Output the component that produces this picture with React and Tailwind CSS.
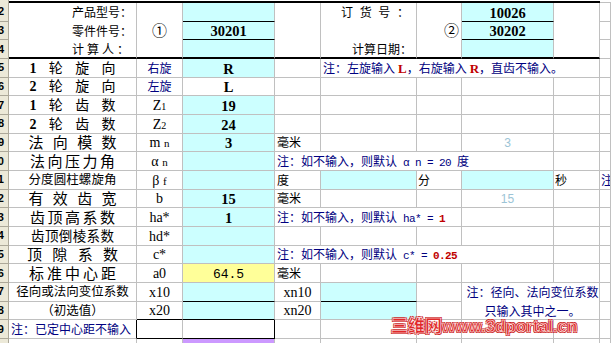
import React from 'react';
import clsx from 'clsx';
import { twMerge } from 'tailwind-merge';

// column widths of the sheet (B..J), header strip is 9px
const W = {
  B: 'w-[128px]',
  C: 'w-[46px]',
  D: 'w-[92px]',
  E: 'w-[46px]',
  F: 'w-[96px]',
  G: 'w-[45px]',
  H: 'w-[92px]',
  I: 'w-[46px]',
  J: 'w-[11px]',
};

const cjk = "font-['Liberation_Serif','Noto_Sans_CJK_SC',serif]";
const mono = "font-['Liberation_Mono','Noto_Sans_CJK_SC',monospace] text-[11px] tracking-[-0.6px]";

const Hdr = ({ n }) => (
  <div className="shrink-0 w-[9px] h-full bg-[#ece9d8] border-r border-b border-[#aca899] overflow-hidden flex items-center justify-end">
    <span className="pr-[4px] text-[11px] leading-none font-bold text-black font-['Liberation_Sans',sans-serif]">{n}</span>
  </div>
);

const Cell = ({ w, cls, children }) => (
  <div
    className={twMerge(
      'shrink-0 h-full flex items-center justify-center pt-[2px] overflow-hidden whitespace-nowrap border-r border-b border-r-[#c0c0c0] border-b-[#c0c0c0] text-black',
      w,
      cls
    )}
  >
    {children}
  </div>
);

const Spread = ({ items, w, cls }) => (
  <span className={clsx('flex justify-between items-center', w, cls)}>
    {items.map((c, i) => (
      <span key={i}>{c}</span>
    ))}
  </span>
);

const Num = ({ children }) => <span className="font-['Liberation_Serif',serif] font-bold">{children}</span>;
const Sym = ({ children }) => <span className="font-['Liberation_Serif',serif] text-[14px]">{children}</span>;
const Red = ({ children, m }) => (
  <span className={clsx('text-[#c00000] font-bold', m ? mono : "font-['Liberation_Serif',serif] text-[13px]")}>{children}</span>
);

const Row = ({ n, children }) => (
  <div className="flex h-[18.67px]">
    <Hdr n={n} />
    {children}
  </div>
);

const Note = ({ children }) => <span className="text-[#000080] text-[12px]">{children}</span>;

const Light = ({ children }) => <span className="text-[#9cc4d6] text-[12px] font-['Liberation_Sans',sans-serif]">{children}</span>;

const cyan = 'bg-[#ccffff]';
const top3 = 'border-b-0';

export default function App() {
  return (
    <div className={clsx('relative w-[611px] h-[343px] overflow-hidden bg-white text-[12px] leading-none', cjk)}>
      {/* strip of the row above */}
      <div className="flex h-[3px]">
        <div className="w-[9px] bg-[#ece9d8] border-r border-[#aca899]" />
        <div className="w-[591px] border-b-2 border-black" />
        <div className="w-[11px] border-b border-[#c0c0c0]" />
      </div>

      {/* header block */}
      <Row n="2">
        <Cell w={W.B} cls={clsx(top3, 'justify-end pr-[7px]')}>
          <Spread w="w-[57px]" items={['产', '品', '型', '号', '：']} />
        </Cell>
        <Cell w={W.C} cls={top3} />
        <Cell w={W.D} cls={clsx(cyan, 'border-b-black')} />
        <Cell w={W.E} cls={top3} />
        <Cell w={W.F} cls={clsx(top3, 'justify-end pr-[7px]')}>
          <Spread w="w-[68px]" items={['订', '货', '号', '：']} />
        </Cell>
        <Cell w={W.G} cls={top3} />
        <Cell w={W.H} cls={clsx(cyan, 'border-b-black text-[14.5px]')}>
          <Num>10026</Num>
        </Cell>
        <Cell w={W.I} cls={top3} />
        <Cell w={W.J} />
      </Row>
      <Row n="3">
        <Cell w={W.B} cls={clsx(top3, 'justify-end pr-[7px]')}>
          <Spread w="w-[57px]" items={['零', '件', '件', '号', '：']} />
        </Cell>
        <Cell w={W.C} cls={clsx(top3, 'text-[15px]')}>①</Cell>
        <Cell w={W.D} cls={clsx(cyan, 'border-b-black text-[14.5px]')}>
          <Num>30201</Num>
        </Cell>
        <Cell w={W.E} cls={top3} />
        <Cell w={W.F} cls={top3} />
        <Cell w={W.G} cls={clsx(top3, 'justify-end pr-[2px] text-[15px]')}>②</Cell>
        <Cell w={W.H} cls={clsx(cyan, 'border-b-black text-[14.5px]')}>
          <Num>30202</Num>
        </Cell>
        <Cell w={W.I} cls={top3} />
        <Cell w={W.J} />
      </Row>
      <Row n="4">
        <Cell w={W.B} cls="border-b-2 border-b-black justify-end pr-[7px]">
          <Spread w="w-[57px]" items={['计', '算', '人', '：']} />
        </Cell>
        <Cell w={W.C} cls="border-b-2 border-b-black" />
        <Cell w={W.D} cls={clsx(cyan, 'border-b-2 border-b-black')} />
        <Cell w={W.E} cls="border-b-2 border-b-black" />
        <Cell w={W.F} cls="border-b-2 border-b-black justify-end pr-[7px]">
          <Spread w="w-[57px]" items={['计', '算', '日', '期', '：']} />
        </Cell>
        <Cell w={W.G} cls="border-b-2 border-b-black" />
        <Cell w={W.H} cls={clsx(cyan, 'border-b-2 border-b-black')} />
        <Cell w={W.I} cls="border-b-2 border-b-black" />
        <Cell w={W.J} />
      </Row>

      {/* gear pair */}
      <Row n="5">
        <Cell w={W.B} cls="text-[14px]">
          <Spread w="w-[86px]" items={[<Num>1</Num>, '轮', '旋', '向']} />
        </Cell>
        <Cell w={W.C}>
          <Note>右旋</Note>
        </Cell>
        <Cell w={W.D} cls={clsx(cyan, 'text-[14.5px]')}>
          <Num>R</Num>
        </Cell>
        <Cell w={W.E} />
        <Cell w="w-[279px]" cls="justify-start pl-[2px]">
          <Note>
            注：左旋输入 <Red>L</Red>，右旋输入 <Red>R</Red>，直齿不输入。
          </Note>
        </Cell>
        <Cell w={W.J} />
      </Row>
      <Row n="6">
        <Cell w={W.B} cls="text-[14px]">
          <Spread w="w-[86px]" items={[<Num>2</Num>, '轮', '旋', '向']} />
        </Cell>
        <Cell w={W.C}>
          <Note>左旋</Note>
        </Cell>
        <Cell w={W.D} cls="text-[14.5px]">
          <Num>L</Num>
        </Cell>
        <Cell w={W.E} />
        <Cell w={W.F} />
        <Cell w={W.G} />
        <Cell w={W.H} />
        <Cell w={W.I} />
        <Cell w={W.J} />
      </Row>
      <Row n="7">
        <Cell w={W.B} cls="text-[14px]">
          <Spread w="w-[86px]" items={[<Num>1</Num>, '轮', '齿', '数']} />
        </Cell>
        <Cell w={W.C}>
          <Sym>
            Z<span className="text-[10px]">1</span>
          </Sym>
        </Cell>
        <Cell w={W.D} cls={clsx(cyan, 'text-[14.5px]')}>
          <Num>19</Num>
        </Cell>
        <Cell w={W.E} />
        <Cell w={W.F} />
        <Cell w={W.G} />
        <Cell w={W.H} />
        <Cell w={W.I} />
        <Cell w={W.J} />
      </Row>
      <Row n="8">
        <Cell w={W.B} cls="text-[14px]">
          <Spread w="w-[86px]" items={[<Num>2</Num>, '轮', '齿', '数']} />
        </Cell>
        <Cell w={W.C}>
          <Sym>
            Z<span className="text-[10px]">2</span>
          </Sym>
        </Cell>
        <Cell w={W.D} cls={clsx(cyan, 'text-[14.5px]')}>
          <Num>24</Num>
        </Cell>
        <Cell w={W.E} />
        <Cell w={W.F} />
        <Cell w={W.G} />
        <Cell w={W.H} />
        <Cell w={W.I} />
        <Cell w={W.J} />
      </Row>
      <Row n="9">
        <Cell w={W.B} cls="text-[15px]">
          <Spread w="w-[88px]" items={['法', '向', '模', '数']} />
        </Cell>
        <Cell w={W.C}>
          <Sym>
            m <span className="text-[11px]">n</span>
          </Sym>
        </Cell>
        <Cell w={W.D} cls={clsx(cyan, 'text-[14.5px]')}>
          <Num>3</Num>
        </Cell>
        <Cell w={W.E} cls="justify-start pl-[2px]">毫米</Cell>
        <Cell w={W.F} />
        <Cell w={W.G} />
        <Cell w={W.H}>
          <Light>3</Light>
        </Cell>
        <Cell w={W.I} />
        <Cell w={W.J} />
      </Row>
      <Row n="10">
        <Cell w={W.B} cls="text-[15px]">
          <Spread w="w-[85px]" items={['法', '向', '压', '力', '角']} />
        </Cell>
        <Cell w={W.C}>
          <Sym>
            α <span className="text-[11px]">n</span>
          </Sym>
        </Cell>
        <Cell w={W.D} cls={cyan} />
        <Cell w="w-[279px]" cls="justify-start pl-[2px]">
          <Note>
            注：如不输入，则默认<span className={mono}> α n = 20 </span>度
          </Note>
        </Cell>
        <Cell w={W.I} />
        <Cell w={W.J} />
      </Row>
      <Row n="11">
        <Cell w={W.B} cls="text-[12.5px]">
          <Spread w="w-[88px]" items={['分', '度', '圆', '柱', '螺', '旋', '角']} />
        </Cell>
        <Cell w={W.C}>
          <Sym>
            β <span className="text-[11px]">f</span>
          </Sym>
        </Cell>
        <Cell w={W.D} cls={cyan} />
        <Cell w={W.E} cls="justify-start pl-[2px]">度</Cell>
        <Cell w={W.F} cls={cyan} />
        <Cell w={W.G} cls="justify-start pl-[1px]">分</Cell>
        <Cell w={W.H} cls={cyan} />
        <Cell w={W.I} cls="justify-start pl-[1px]">秒</Cell>
        <Cell w={W.J} cls="justify-start pl-[1px]">
          <Note>注</Note>
        </Cell>
      </Row>
      <Row n="12">
        <Cell w={W.B} cls="text-[15px]">
          <Spread w="w-[88px]" items={['有', '效', '齿', '宽']} />
        </Cell>
        <Cell w={W.C}>
          <Sym>b</Sym>
        </Cell>
        <Cell w={W.D} cls={clsx(cyan, 'text-[14.5px]')}>
          <Num>15</Num>
        </Cell>
        <Cell w={W.E} cls="justify-start pl-[2px]">毫米</Cell>
        <Cell w={W.F} />
        <Cell w={W.G} />
        <Cell w={W.H}>
          <Light>15</Light>
        </Cell>
        <Cell w={W.I} />
        <Cell w={W.J} />
      </Row>
      <Row n="13">
        <Cell w={W.B} cls="text-[15px]">
          <Spread w="w-[85px]" items={['齿', '顶', '高', '系', '数']} />
        </Cell>
        <Cell w={W.C}>
          <Sym>ha*</Sym>
        </Cell>
        <Cell w={W.D} cls={clsx(cyan, 'text-[14.5px]')}>
          <Num>1</Num>
        </Cell>
        <Cell w="w-[187px]" cls="justify-start pl-[2px]">
          <Note>
            注：如不输入，则默认<span className={mono}> ha* = </span>
            <Red m>1</Red>
          </Note>
        </Cell>
        <Cell w={W.H} />
        <Cell w={W.I} />
        <Cell w={W.J} />
      </Row>
      <Row n="14">
        <Cell w={W.B} cls="text-[13.5px]">
          <Spread w="w-[83px]" items={['齿', '顶', '倒', '棱', '系', '数']} />
        </Cell>
        <Cell w={W.C}>
          <Sym>hd*</Sym>
        </Cell>
        <Cell w={W.D} cls={cyan} />
        <Cell w={W.E} />
        <Cell w={W.F} />
        <Cell w={W.G} />
        <Cell w={W.H} />
        <Cell w={W.I} />
        <Cell w={W.J} />
      </Row>
      <Row n="15">
        <Cell w={W.B} cls="text-[15px]">
          <Spread w="w-[91px]" items={['顶', '隙', '系', '数']} />
        </Cell>
        <Cell w={W.C}>
          <Sym>c*</Sym>
        </Cell>
        <Cell w={W.D} cls={cyan} />
        <Cell w="w-[279px]" cls="justify-start pl-[2px]">
          <Note>
            注：如不输入，则默认<span className={mono}> c* = </span>
            <Red m>0.25</Red>
          </Note>
        </Cell>
        <Cell w={W.I} />
        <Cell w={W.J} />
      </Row>
      <Row n="16">
        <Cell w={W.B} cls="text-[15px]">
          <Spread w="w-[87px]" items={['标', '准', '中', '心', '距']} />
        </Cell>
        <Cell w={W.C}>
          <Sym>a0</Sym>
        </Cell>
        <Cell w={W.D} cls="bg-[#ffff99]">
          <span className="font-['Liberation_Mono',monospace] text-[13px]">64.5</span>
        </Cell>
        <Cell w={W.E} cls="justify-start pl-[2px]">毫米</Cell>
        <Cell w={W.F} />
        <Cell w={W.G} />
        <Cell w={W.H} />
        <Cell w={W.I} />
        <Cell w={W.J} />
      </Row>

      {/* shift coefficients, note spans two rows */}
      <div className="flex h-[37.34px]">
        <div className="flex flex-col">
          <Row n="17">
            <Cell w={W.B} cls="text-[12.5px]">径向或法向变位系数</Cell>
            <Cell w={W.C}>
              <Sym>x10</Sym>
            </Cell>
            <Cell w={W.D} cls={clsx(cyan, 'border-b-black')} />
            <Cell w={W.E}>
              <Sym>xn10</Sym>
            </Cell>
            <Cell w={W.F} cls={clsx(cyan, 'border-b-black')} />
            <Cell w={W.G} />
          </Row>
          <Row n="18">
            <Cell w={W.B} cls="text-[12.5px]">（初选值）</Cell>
            <Cell w={W.C} cls="border-b-black">
              <Sym>x20</Sym>
            </Cell>
            <Cell w={W.D} cls={clsx(cyan, 'border-b-black')} />
            <Cell w={W.E}>
              <Sym>xn20</Sym>
            </Cell>
            <Cell w={W.F} cls={cyan} />
            <Cell w={W.G} />
          </Row>
        </div>
        <Cell w="w-[138px]" cls="flex-col gap-[7px] pl-[4px]">
          <Note>注：径向、法向变位系数</Note>
          <Note>只输入其中之一。</Note>
        </Cell>
        <div className="flex flex-col">
          <div className="h-[18.67px]">
            <Cell w={W.J} />
          </div>
          <div className="h-[18.67px]">
            <Cell w={W.J} />
          </div>
        </div>
      </div>

      <Row n="19">
        <Cell w={W.B} cls="justify-start pl-[2px] border-r-black">
          <Note>注：已定中心距不输入</Note>
        </Cell>
        <Cell w={W.C} cls="border-b-black" />
        <Cell w={W.D} cls="border-b-black border-r-black" />
        <Cell w={W.E} />
        <Cell w={W.F} />
        <Cell w={W.G} />
        <Cell w={W.H} />
        <Cell w={W.I} />
        <Cell w={W.J} />
      </Row>
      <div className="flex h-[6px]">
        <Hdr n="" />
        <Cell w={W.B} />
        <Cell w={W.C} />
        <Cell w={W.D} cls="bg-[#cc99ff]" />
        <Cell w={W.E} />
        <Cell w={W.F} />
        <Cell w={W.G} />
        <Cell w={W.H} />
        <Cell w={W.I} />
        <Cell w={W.J} />
      </div>

      {/* site watermark */}
      <div className="absolute left-[391px] top-[318px] whitespace-nowrap text-[17px] leading-none font-black text-[#e02828] font-['Liberation_Sans','Noto_Sans_CJK_SC',sans-serif] [-webkit-text-stroke:0.6px_#ffffff] [text-shadow:1px_1px_0_#c81e1e,-1px_-1px_0_#c81e1e,1px_-1px_0_#c81e1e,-1px_1px_0_#c81e1e]">
        三维网www.3dportal.cn
      </div>
    </div>
  );
}
